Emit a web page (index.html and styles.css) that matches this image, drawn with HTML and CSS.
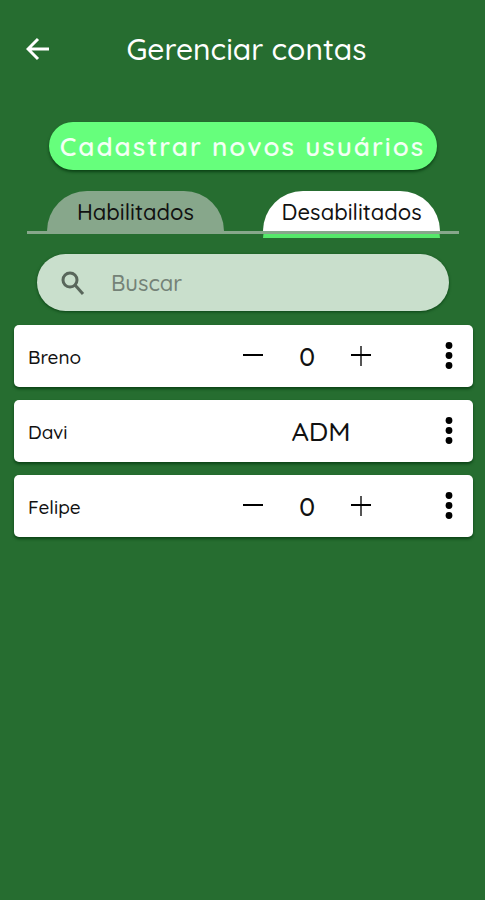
FILE: index.html
```html
<!DOCTYPE html>
<html lang="pt-BR">
<head>
<meta charset="utf-8">
<meta name="viewport" content="width=device-width, initial-scale=1">
<title>Gerenciar contas</title>
<link rel="stylesheet" href="styles.css">
</head>
<body>
<header class="topbar">
  <a class="back" href="#" aria-label="Voltar">
    <svg width="24" height="24" viewBox="0 0 24 24" fill="none" stroke="currentColor" stroke-width="3"><path d="M23 12H3M12 2L2 12l10 10"/></svg>
  </a>
  <h1 class="title">Gerenciar contas</h1>
</header>
<main>
  <button class="register" type="button">Cadastrar novos usuários</button>
  <div class="tabs" role="tablist">
    <button class="tab" type="button" role="tab" aria-selected="false">Habilitados</button>
    <button class="tab tab-active" type="button" role="tab" aria-selected="true">Desabilitados</button>
  </div>
  <label class="search">
    <svg width="24" height="24" viewBox="0 0 24 24" fill="none" stroke="currentColor" stroke-width="3"><circle cx="9" cy="9" r="7"/><path d="M14 14l8 9"/></svg>
    <input class="search-input" type="search" placeholder="Buscar" aria-label="Buscar">
  </label>
  <ul class="accounts">
    <li class="account">
      <span class="name">Breno</span>
      <div class="stepper">
        <button class="icon-button" type="button" aria-label="Diminuir"><svg width="20" height="20" viewBox="0 0 20 20" stroke="currentColor" stroke-width="2"><path d="M0 9h20"/></svg></button>
        <span class="value">0</span>
        <button class="icon-button" type="button" aria-label="Aumentar"><svg width="20" height="20" viewBox="0 0 20 20" stroke="currentColor" stroke-width="2"><path stroke="#555" d="M10 0v20"/><path d="M0 9h20"/></svg></button>
      </div>
      <button class="icon-button" type="button" aria-label="Opções"><svg width="8" height="28" viewBox="0 0 8 28" fill="currentColor"><circle cx="4" cy="3.5" r="3.4"/><circle cx="4" cy="13.5" r="3.4"/><circle cx="4" cy="23.5" r="3.4"/></svg></button>
    </li>
    <li class="account">
      <span class="name">Davi</span>
      <span class="value">ADM</span>
      <button class="icon-button" type="button" aria-label="Opções"><svg width="8" height="28" viewBox="0 0 8 28" fill="currentColor"><circle cx="4" cy="3.5" r="3.4"/><circle cx="4" cy="13.5" r="3.4"/><circle cx="4" cy="23.5" r="3.4"/></svg></button>
    </li>
    <li class="account">
      <span class="name">Felipe</span>
      <div class="stepper">
        <button class="icon-button" type="button" aria-label="Diminuir"><svg width="20" height="20" viewBox="0 0 20 20" stroke="currentColor" stroke-width="2"><path d="M0 9h20"/></svg></button>
        <span class="value">0</span>
        <button class="icon-button" type="button" aria-label="Aumentar"><svg width="20" height="20" viewBox="0 0 20 20" stroke="currentColor" stroke-width="2"><path stroke="#555" d="M10 0v20"/><path d="M0 9h20"/></svg></button>
      </div>
      <button class="icon-button" type="button" aria-label="Opções"><svg width="8" height="28" viewBox="0 0 8 28" fill="currentColor"><circle cx="4" cy="3.5" r="3.4"/><circle cx="4" cy="13.5" r="3.4"/><circle cx="4" cy="23.5" r="3.4"/></svg></button>
    </li>
  </ul>
</main>
</body>
</html>
```
FILE: styles.css
```css
* { box-sizing: border-box; }

body {
  margin: 0;
  min-height: 100vh;
  background: #266d30;
  color: #111;
  font-family: Quicksand, Lato, sans-serif;
  font-weight: 500;
}

button, input {
  border: 0;
  padding: 0;
  background: none;
  color: inherit;
  font: inherit;
}

svg { display: block; }

.topbar {
  display: grid;
  grid-template-columns: 24px 1fr 24px;
  align-items: center;
  height: 98px;
  padding: 0 26px;
  color: #fff;
}

.back { color: inherit; }

.title {
  margin: 0;
  padding-left: 8px;
  font-size: 30px;
  font-weight: 500;
  line-height: 40px;
  text-align: center;
}

.register {
  display: block;
  width: 80%;
  height: 48px;
  margin: 24px auto 0;
  border-radius: 24px;
  background: #66ff7c;
  box-shadow: 0 2px 3px #0b4315;
  color: #f4fff5;
  font-size: 26px;
  font-weight: 600;
  letter-spacing: 2px;
  white-space: nowrap;
}

.tabs {
  display: flex;
  justify-content: space-between;
  height: 43px;
  margin: 21px 26px 0 27px;
  padding: 0 19px 0 20px;
  border-bottom: 3px solid #87a78b;
}

.tab {
  width: 45%;
  height: 40px;
  padding-top: 2px;
  border-radius: 40px 40px 0 0;
  background: #87a78b;
  font-size: 22px;
}

.tab-active {
  background: #fff;
  box-shadow: 0 3px #87a78b, 0 7px #55e96a;
}

.search {
  display: flex;
  align-items: center;
  gap: 26px;
  height: 57px;
  margin: 20px 36px 0 37px;
  padding: 0 24px;
  border-radius: 29px;
  background: #c9dfcc;
  box-shadow: 0 1px 3px #0b4315;
  color: #59665b;
}

.search-input {
  flex: 1;
  min-width: 0;
  outline: 0;
  font-size: 22px;
}

.search-input::placeholder { color: #748277; opacity: 1; }

.accounts {
  display: grid;
  gap: 13px;
  margin: 14px 12px 0 14px;
  padding: 0;
  list-style: none;
}

.account {
  display: grid;
  grid-template-columns: 1fr 156px 40px;
  column-gap: 30px;
  align-items: center;
  height: 62px;
  padding: 0 4px 0 14px;
  border-radius: 5px;
  background: #fff;
  box-shadow: 0 2px 3px #0b4315;
}

.name {
  padding-top: 2px;
  font-size: 19px;
}

.stepper {
  display: grid;
  grid-template-columns: 20px 88px 20px;
  align-items: center;
}

.value {
  font-size: 27px;
  line-height: 32px;
  text-align: center;
}

.icon-button {
  display: grid;
  place-items: center;
  color: #000;
}
```
